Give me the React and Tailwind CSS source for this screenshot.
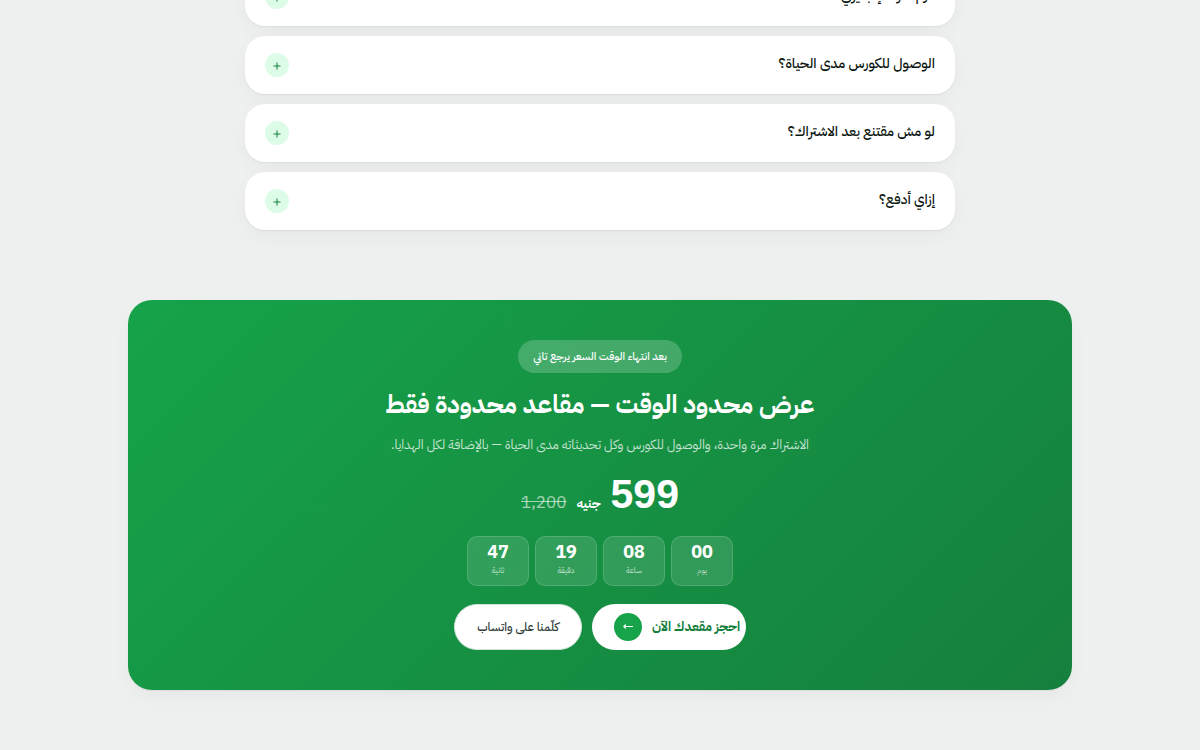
const questions = [
  'لازم أعرف إنجليزي؟',
  'الوصول للكورس مدى الحياة؟',
  'لو مش مقتنع بعد الاشتراك؟',
  'إزاي أدفع؟',
];

const countdown = [
  { value: '00', label: 'يوم' },
  { value: '08', label: 'ساعة' },
  { value: '19', label: 'دقيقة' },
  { value: '47', label: 'ثانية' },
];

function FaqItem({ question }) {
  return (
    <button
      type="button"
      aria-expanded="false"
      className="flex h-[58px] w-full items-center justify-between rounded-[20px] bg-white px-5 text-start shadow-[0_1px_2px_rgba(0,0,0,0.06),0_8px_24px_rgba(0,0,0,0.04)]"
    >
      <span className="pb-0.5 text-[14px] leading-5 font-medium text-[#0b1610]">{question}</span>
      <span
        aria-hidden="true"
        className="flex size-6 items-center justify-center rounded-full bg-[#dcfce7] pt-0.5 text-[#15803d]"
      >
        <svg viewBox="0 0 8 8" className="size-2" fill="none" stroke="currentColor" strokeWidth="1">
          <path d="M4 .5v7M.5 4h7" />
        </svg>
      </span>
    </button>
  );
}

function Counter({ value, label }) {
  return (
    <div className="flex h-[50px] w-[62px] flex-col items-center rounded-[10px] border border-white/15 bg-white/12 pt-[3px]">
      <span className="text-lg leading-6 font-bold text-white">{value}</span>
      <span className="text-[8px] leading-3 text-white/70">{label}</span>
    </div>
  );
}

export default function App() {
  return (
    <div
      dir="rtl"
      lang="ar"
      className="min-h-screen overflow-hidden bg-[#eef1f0] pb-[60px] font-['IBM_Plex_Sans_Arabic','Noto_Sans','DejaVu_Sans',sans-serif]"
    >
      <section className="mx-auto -mt-8 flex max-w-[710px] flex-col gap-[10px]">
        {questions.map((q) => (
          <FaqItem key={q} question={q} />
        ))}
      </section>

      <section className="mx-auto mt-[70px] flex max-w-[944px] flex-col items-center rounded-3xl bg-linear-135 from-[#16a34a] to-[#15803d] py-10 text-center text-white shadow-[0_1px_2px_rgba(0,0,0,0.05),0_8px_24px_rgba(0,0,0,0.04)]">
        <span className="flex h-[33px] items-center rounded-full bg-white/20 px-[15px] pt-px text-[11px] font-medium">
          بعد انتهاء الوقت السعر يرجع تاني
        </span>
        <h2 className="mt-[14px] text-[25px] leading-9 font-bold">عرض محدود الوقت — مقاعد محدودة فقط</h2>
        <p className="mt-[10px] text-[13px] leading-6 text-white/75">
          الاشتراك مرة واحدة، والوصول للكورس وكل تحديثاته مدى الحياة — بالإضافة لكل الهدايا.
        </p>
        <div className="mt-[13px] flex h-12 items-baseline gap-[10px] leading-[48px]">
          <span className="font-['Liberation_Sans',sans-serif] text-[41px] font-bold">599</span>
          <span className="text-[13px] font-bold">جنيه</span>
          <span className="text-[17px] text-white/60 line-through">1,200</span>
        </div>
        <div className="mt-[18px] flex gap-[6px]">
          {countdown.map((c) => (
            <Counter key={c.label} value={c.value} label={c.label} />
          ))}
        </div>
        <div className="mt-[18px] flex gap-[10px]">
          <a
            href="#book"
            className="flex h-[46px] w-[154px] items-center justify-between rounded-full bg-white ps-[6px] pe-[22px] text-[13px] font-bold whitespace-nowrap text-[#15803d]"
          >
            احجز مقعدك الآن
            <span
              aria-hidden="true"
              className="flex size-7 items-center justify-center rounded-full bg-[#16a34a] text-white"
            >
              <svg viewBox="0 0 10 8" className="h-2 w-[10px]" fill="none" stroke="currentColor" strokeWidth="1.1">
                <path d="M10 3.5H.8M2.8 1.5.8 3.5l2 2" />
              </svg>
            </span>
          </a>
          <a
            href="#whatsapp"
            className="flex h-[46px] w-32 items-center justify-center rounded-full border border-[#d5e5dc] bg-white text-[12px] font-medium whitespace-nowrap text-[#2f3a35]"
          >
            كلّمنا على واتساب
          </a>
        </div>
      </section>
    </div>
  );
}
